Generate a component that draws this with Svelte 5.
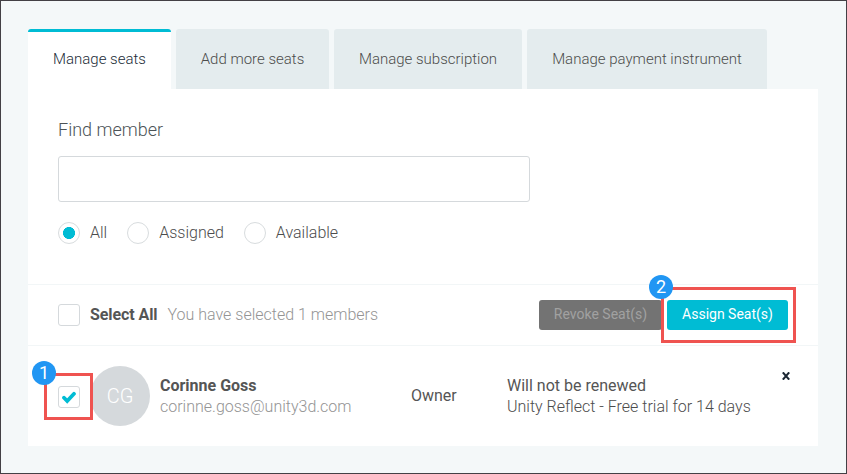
<script>
  const tabs = [
    { label: 'Manage seats', width: 143 },
    { label: 'Add more seats', width: 153 },
    { label: 'Manage subscription', width: 188 },
    { label: 'Manage payment instrument', width: 240 }
  ];
  const filters = ['All', 'Assigned', 'Available'];
  let activeTab = $state('Manage seats');
  let filter = $state('All');
</script>

<div class="page">
  <nav class="tabs">
    {#each tabs as tab}
      <button
        class="tab"
        class:active={activeTab === tab.label}
        style="width: {tab.width}px"
        onclick={() => (activeTab = tab.label)}>{tab.label}</button>
    {/each}
  </nav>

  <main class="panel">
    <section class="find">
      <label class="title" for="member">Find member</label>
      <input id="member" class="search" type="text" />
      <div class="filters">
        {#each filters as name}
          <button class="filter" onclick={() => (filter = name)}>
            <span class="radio" class:on={filter === name}></span>
            <span class="label">{name}</span>
          </button>
        {/each}
      </div>
    </section>

    <section class="bulk">
      <span class="box"></span>
      <span class="all">Select All</span>
      <span class="count">You have selected 1 members</span>
      <button class="btn revoke">Revoke Seat(s)</button>
      <div class="assign-wrap">
        <button class="btn assign">Assign Seat(s)</button>
        <span class="frame frame-two"></span>
        <span class="badge badge-two">2</span>
      </div>
    </section>

    <section class="member">
      <div class="check-wrap">
        <span class="box">
          <svg width="14" height="13" viewBox="0 0 14 13">
            <path d="M2 6.7 L5.2 10 L12 2.8" fill="none" stroke="#00bcd4" stroke-width="3.7" stroke-linejoin="miter" stroke-linecap="round" />
          </svg>
        </span>
        <span class="frame frame-one"></span>
        <span class="badge badge-one">1</span>
      </div>
      <div class="avatar">CG</div>
      <div class="who">
        <span class="name">Corinne Goss</span>
        <span class="mail">corinne.goss@unity3d.com</span>
      </div>
      <div class="role">Owner</div>
      <div class="plan">
        <span class="status">Will not be renewed</span>
        <span>Unity Reflect - Free trial for 14 days</span>
      </div>
      <svg class="close" width="8" height="8" viewBox="0 0 8 8">
        <path d="M0.8 0.4 L7.2 7.6 M7.2 0.4 L0.8 7.6" stroke="#1b2733" stroke-width="2.1" />
      </svg>
    </section>
  </main>
</div>

<style>
  .page {
    box-sizing: border-box;
    width: 847px;
    height: 474px;
    padding: 28px 28px 0 27px;
    border: 1px solid #434045;
    background: #f4f8f9;
    font-family: Roboto, sans-serif;
    font-size: 16px;
    font-weight: 300;
    color: #4c5357;
    overflow: hidden;
  }
  button {
    font: inherit;
    color: inherit;
    border: 0;
    margin: 0;
    padding: 0;
    background: none;
    white-space: nowrap;
  }
  .tabs {
    display: flex;
    gap: 5px;
    height: 60px;
  }
  .tab {
    box-sizing: border-box;
    height: 60px;
    border-radius: 3px 3px 0 0;
    background: #e4ecee;
    font-size: 15px;
    color: #4c4c4c;
  }
  .tab.active {
    background: linear-gradient(#00bcd4 3px, #fff 3px);
    color: #222c37;
  }
  .panel {
    width: 790px;
    height: 357px;
    background: #fff;
  }
  .find {
    box-sizing: border-box;
    height: 195px;
    padding: 30px 30px 0;
  }
  .title {
    display: block;
    height: 37px;
    line-height: 21px;
    font-size: 18px;
  }
  .search {
    display: block;
    box-sizing: border-box;
    width: 472px;
    height: 46px;
    border: 1px solid #d5d9dc;
    border-radius: 3px;
    background: #fff;
    outline: none;
  }
  .filters {
    display: flex;
    gap: 20px;
    margin-top: 20px;
  }
  .filter {
    display: flex;
    align-items: center;
    gap: 10px;
    height: 22px;
    color: #4c4c4c;
  }
  .label {
    padding-bottom: 2px;
  }
  .radio {
    box-sizing: border-box;
    width: 22px;
    height: 22px;
    border: 1px solid #d8dcde;
    border-radius: 50%;
  }
  .radio.on {
    background: radial-gradient(circle, #00bcd4 5.7px, transparent 6.3px);
  }
  .bulk {
    box-sizing: border-box;
    display: flex;
    align-items: center;
    height: 61px;
    padding: 0 30px;
    border-top: 1px solid #f2f6f7;
  }
  .box {
    box-sizing: border-box;
    display: flex;
    flex: none;
    align-items: center;
    justify-content: center;
    width: 22px;
    height: 22px;
    border: 1px solid #d5d9dc;
    border-radius: 3px;
    background: #fff;
  }
  .all {
    margin-left: 10px;
    padding-bottom: 2px;
    font-weight: 700;
    letter-spacing: -0.08px;
    color: #555;
  }
  .count {
    margin-left: 10px;
    padding-bottom: 2px;
    color: #949494;
  }
  .btn {
    height: 30px;
    border-radius: 3px;
    font-size: 14px;
    font-weight: 400;
    padding-bottom: 2px;
  }
  .revoke {
    width: 123px;
    margin-left: auto;
    background: #737373;
    color: #a1a1a1;
  }
  .assign-wrap {
    position: relative;
    margin-left: 5px;
  }
  .assign {
    display: block;
    width: 121px;
    background: #00bcd4;
    color: #fff;
  }
  .frame {
    position: absolute;
    box-sizing: border-box;
    border: 3px solid #ef5350;
  }
  .frame-two {
    left: -6px;
    top: -13px;
    width: 135px;
    height: 56px;
  }
  .badge {
    position: absolute;
    width: 24px;
    height: 24px;
    border-radius: 50%;
    background: #2196f3;
    color: #fff;
    font-size: 18px;
    font-weight: 400;
    line-height: 24px;
    text-align: center;
  }
  .badge-two {
    left: -18px;
    top: -25px;
  }
  .member {
    box-sizing: border-box;
    display: flex;
    height: 101px;
    padding: 20px 28px 0 30px;
    border-top: 1px solid #f2f6f7;
  }
  .check-wrap {
    position: relative;
    z-index: 1;
    width: 32px;
    height: 22px;
    margin-top: 20px;
  }
  .frame-one {
    left: -14px;
    top: -13px;
    width: 49px;
    height: 47px;
  }
  .badge-one {
    left: -26px;
    top: -25px;
  }
  .avatar {
    flex: none;
    width: 60px;
    height: 60px;
    border-radius: 50%;
    background: #d5d9dc;
    color: #fff;
    font-size: 20px;
    line-height: 61px;
    text-align: center;
  }
  .who,
  .plan {
    display: flex;
    flex-direction: column;
    padding-top: 9px;
    line-height: 21px;
    white-space: nowrap;
  }
  .who {
    width: 251px;
    margin-left: 10px;
  }
  .name {
    font-weight: 700;
    color: #555;
  }
  .mail {
    color: #949494;
  }
  .role {
    width: 96px;
    line-height: 59px;
    font-weight: 400;
    color: #555;
  }
  .plan {
    color: #4c4c4c;
  }
  .status {
    font-weight: 400;
    color: #555;
  }
  .close {
    margin: 6px 0 0 auto;
  }
</style>
